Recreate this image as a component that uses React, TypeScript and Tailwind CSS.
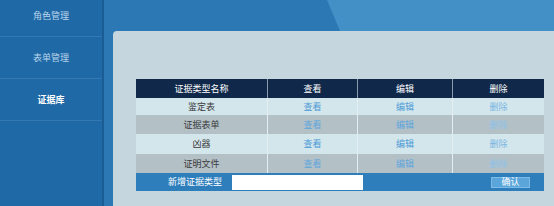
const font = { fontFamily: '"Noto Sans CJK SC", "Noto Sans", sans-serif' };

const menu = [
  { label: "角色管理", active: false },
  { label: "表单管理", active: false },
  { label: "证据库", active: true },
];

const rows = [
  { name: "鉴定表", h: "h-[17px]", dark: false },
  { name: "证据表单", h: "h-[19px]", dark: true },
  { name: "凶器", h: "h-[20px]", dark: false },
  { name: "证明文件", h: "h-[19px]", dark: true },
];

export default function App() {
  return (
    <div className="flex h-[206px] w-[554px] overflow-hidden bg-[#2b78b4]" style={font}>
      <aside className="w-[104px] shrink-0 border-r-2 border-[#1a5d95] bg-[#1f69a7]">
        <div className="-mt-[5px]">
          {menu.map((item) => (
            <div
              className={`flex h-[42px] items-center justify-center border-b border-[#3478b1] text-[9px] ${item.active ? "font-semibold text-white" : "text-[#b8d4ea]"}`}
              key={item.label}
            >
              {item.label}
            </div>
          ))}
        </div>
      </aside>
      <main className="relative flex flex-1 flex-col">
        <div className="absolute left-[223px] right-0 top-0 h-[31px] bg-[#4290c6] [clip-path:polygon(0_0,100%_0,100%_100%,13px_100%)]" />
        <div className="h-[31px] shrink-0" />
        <div className="relative ml-[9px] flex-1 rounded-tl-[4px] bg-[#c6d6de] pl-[23px] pt-[48px]">
          <div className="w-[408px] text-[9px]">
            <div className="grid h-[19px] grid-cols-[132px_90px_95px_91px] bg-[#10294a] text-white">
              {["证据类型名称", "查看", "编辑", "删除"].map((t, i) => (
                <div className={`flex items-center justify-center ${i < 3 ? "border-r border-[#8a9cac]" : ""}`} key={t}>{t}</div>
              ))}
            </div>
            {rows.map((r) => (
              <div className={`grid ${r.h} grid-cols-[132px_90px_95px_91px] ${r.dark ? "bg-[#b3c1c7]" : "bg-[#d3e6ec]"}`} key={r.name}>
                <div className="flex items-center justify-center border-r border-[#e4eef1] text-[#3a3a3a]">{r.name}</div>
                <div className={`flex items-center justify-center border-r border-[#e4eef1] ${r.dark ? "text-[#5ea6dc]" : "text-[#4c9bd6]"}`}>查看</div>
                <div className={`flex items-center justify-center border-r border-[#e4eef1] ${r.dark ? "text-[#5ea6dc]" : "text-[#4c9bd6]"}`}>编辑</div>
                <div className={`flex items-center justify-center ${r.dark ? "text-[#8cc2ea]" : "text-[#7ab6e2]"}`}>删除</div>
              </div>
            ))}
            <div className="flex h-[18px] items-center bg-[#2e7ebb]">
              <div className="w-[96px] pr-[10px] text-right text-white">新增证据类型</div>
              <input className="h-[15px] w-[131px] bg-white outline-none" />
              <div className="flex-1" />
              <button className="mr-[14px] flex h-[11px] w-[39px] items-center justify-center border border-[#7dbbe6] bg-[#5aa6db] text-[9px] text-white" type="button">确认</button>
            </div>
          </div>
        </div>
      </main>
    </div>
  );
}
